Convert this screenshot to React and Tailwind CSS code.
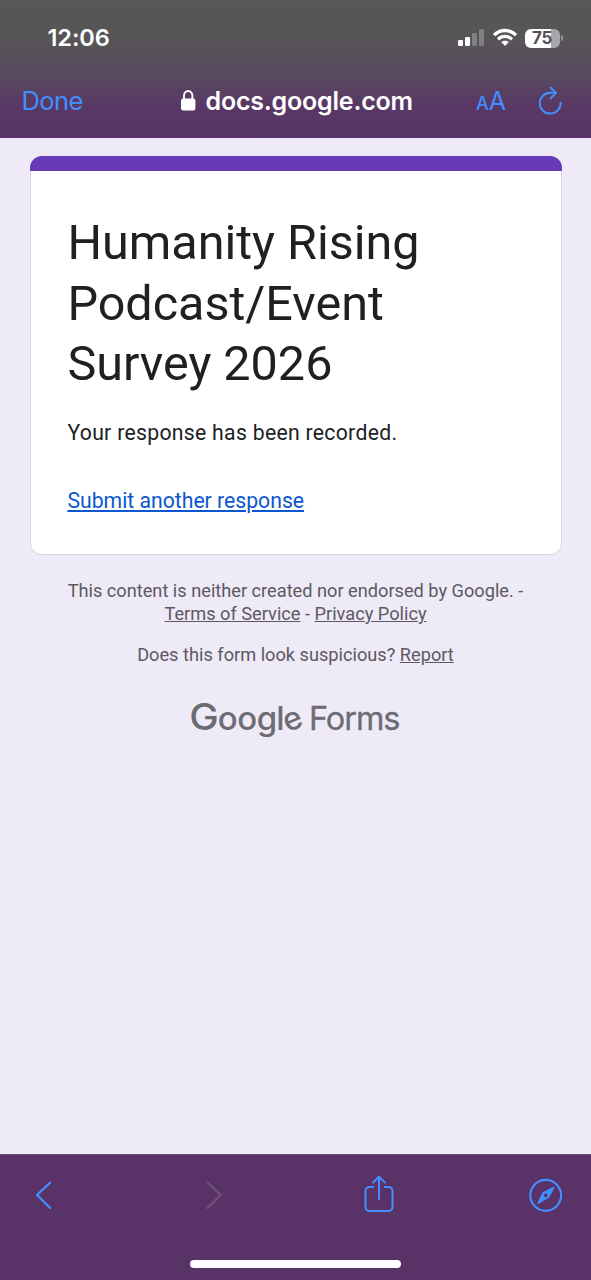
function StatusBar() {
  return (
    <div className="flex h-[76px] items-center justify-between pr-[28px] pl-[47.5px]">
      <span className="text-[23.5px] leading-none font-semibold tracking-[-0.1px] whitespace-nowrap text-white">12:06</span>
      <div className="flex items-center">
        <svg className="h-[20px] w-[28px]" viewBox="0 0 28 20" fill="#fff">
          <rect x="0" y="12" width="5" height="6" rx="1.3" />
          <rect x="7" y="9" width="5" height="9" rx="1.3" />
          <rect x="14" y="5" width="5" height="13" rx="1.3" opacity=".25" />
          <rect x="21" y="1" width="5" height="17" rx="1.3" opacity=".25" />
        </svg>
        <svg className="ml-[6px] h-[20px] w-[26px]" viewBox="0 0 26 20" fill="none" stroke="#fff">
          <path d="M2 7.2C8.2.9 17.8.9 24 7.2" strokeWidth="3.3" />
          <path d="M6 11.3c4-3.8 10-3.8 14 0" strokeWidth="3.2" />
          <path d="M13 18l-3.8-3.9c2.2-1.9 5.4-1.9 7.6 0z" fill="#fff" stroke="none" />
        </svg>
        <div className="ml-[7px] flex h-[19px] w-[35px] items-center justify-center rounded-[6px] bg-[linear-gradient(to_right,#fff_75%,#aaa6ab_75%)]">
          <span className="pr-[1px] text-[17px] leading-none font-bold tracking-[-0.3px] text-[#57505b]">75</span>
        </div>
        <div className="ml-[1px] h-[6px] w-[2px] rounded-r-full bg-[#98939a]" />
      </div>
    </div>
  );
}

function AddressBar() {
  return (
    <div className="flex h-[50px] items-center pl-[21.5px] text-[#438fff]">
      <span className="w-[158.5px] text-[25.5px] leading-none tracking-[-0.6px] whitespace-nowrap">Done</span>
      <svg className="h-[22px] w-[16px]" viewBox="0 0 16 22">
        <rect x="1" y="8.5" width="14.4" height="12" rx="2.2" fill="#fff" />
        <path d="M4 10V5.7a4.2 4.7 0 0 1 8.4 0V10" fill="none" stroke="#fff" strokeWidth="1.9" />
      </svg>
      <span className="ml-[9.5px] w-[270.5px] text-[25px] leading-none font-semibold tracking-[-0.2px] whitespace-nowrap text-white">docs.google.com</span>
      <span className="flex w-[61px] items-baseline leading-none">
        <span className="text-[18px] leading-none font-medium">A</span>
        <span className="text-[25px] leading-none">A</span>
      </span>
      <svg className="h-[30px] w-[26px]" viewBox="0 0 26 30" fill="none" stroke="currentColor" strokeWidth="2" strokeLinecap="round" strokeLinejoin="round">
        <path d="M23.6 16.8A10.4 10.4 0 1 1 13.3 6.8H19" />
        <path d="M13.4 1.5L19 6.9l-5.4 5.5" />
      </svg>
    </div>
  );
}

function Toolbar() {
  return (
    <footer className="flex h-[126px] flex-col items-center justify-between border-t border-[#6c4b7a] bg-[#593368] pt-[19px] pb-[12px]">
      <div className="flex w-full items-center pl-[34px] text-[#438fff]">
        <svg className="h-[42px] w-[18px]" viewBox="0 0 18 42" fill="none" stroke="currentColor" strokeWidth="2.2" strokeLinecap="round" strokeLinejoin="round">
          <path d="M16.2 8.5L3 21l13.2 13" />
        </svg>
        <svg className="ml-[153px] h-[42px] w-[18px] text-[#70517d]" viewBox="0 0 18 42" fill="none" stroke="currentColor" strokeWidth="2.2" strokeLinecap="round" strokeLinejoin="round">
          <path d="M2.5 8.5L15.7 21 2.5 34" />
        </svg>
        <svg className="ml-[141px] h-[42px] w-[30px]" viewBox="0 0 30 42" fill="none" stroke="currentColor" strokeWidth="2" strokeLinecap="round" strokeLinejoin="round">
          <path d="M10 13H5.5A4 4 0 0 0 1.5 17v16a4 4 0 0 0 4 4h19a4 4 0 0 0 4-4V17a4 4 0 0 0-4-4H20" strokeLinecap="butt" />
          <path d="M15 25V3M9 8.6L15 2.7l6 5.9" />
        </svg>
        <svg className="ml-[135px] h-[42px] w-[34px]" viewBox="0 0 34 42">
          <circle cx="16.7" cy="21.3" r="15.4" fill="none" stroke="currentColor" strokeWidth="2.1" />
          <path fill="currentColor" fillRule="evenodd" d="M25.2 13.9L20 23.8 9.3 29.9c-.8.3-1.3-.3-.9-1L13.5 18.6 24.2 12.8c.8-.3 1.4.4 1 1.1zM16.7 19.4a1.9 1.9 0 1 0 0 3.8 1.9 1.9 0 0 0 0-3.8z" />
        </svg>
      </div>
      <div className="h-[8px] w-[211px] rounded-full bg-white" />
    </footer>
  );
}

export default function App() {
  return (
    <div className="flex h-[1280px] w-[591px] flex-col overflow-hidden bg-[#eeeaf8] font-['Inter',sans-serif]">
      <header className="h-[138px] bg-[linear-gradient(to_bottom,#575757_0%,#575557_28%,#584860_56%,#583765_78%,#583467_100%)]">
        <StatusBar />
        <AddressBar />
      </header>
      <main className="flex flex-1 flex-col items-center pt-[18px] font-['Roboto',sans-serif]">
        <section className="mr-[59px] ml-[30px] h-[399px] w-[532px] self-start rounded-[12px] border border-[#d9d7de] bg-white">
          <div className="-mx-px -mt-px h-[15px] rounded-t-[12px] bg-[#673ab7]" />
          <div className="pl-[36.4px]">
            <h1 className="pt-[42px] text-[48.5px] leading-[60.6px] whitespace-nowrap text-[#202020]">
              Humanity Rising
              <br />
              Podcast/Event
              <br />
              Survey 2026
            </h1>
            <p className="mt-[23px] text-[21.2px] leading-[30px] tracking-[0.3px] whitespace-nowrap text-[#202124]">Your response has been recorded.</p>
            <a className="mt-[38px] block text-[21.2px] leading-[30px] whitespace-nowrap text-[#0b57d0] underline">Submit another response</a>
          </div>
        </section>
        <div className="mt-[24px] text-center text-[18.2px] leading-[23px] whitespace-nowrap text-[#5c5960]">
          <p>
            This content is neither created nor endorsed by Google. -
            <br />
            <a className="underline">Terms of Service</a> - <a className="underline">Privacy Policy</a>
          </p>
          <p className="mt-[18px]">
            Does this form look suspicious? <a className="underline">Report</a>
          </p>
        </div>
        <svg className="mt-[25px] h-[60px] w-[232px] overflow-visible fill-[#6e6c73] font-['Inter',sans-serif]" viewBox="0 0 232 60" role="img">
          <g fontWeight="500">
            <text x="9.3" y="38.5" fontSize="36.5" textLength="29.5" lengthAdjust="spacingAndGlyphs">G</text>
            <text x="37.8 57.2 76.8 96.2" y="38.5" fontSize="33">oogl</text>
            <text x="103.5" y="38.5" fontSize="32" transform="rotate(-22 113 29.5)">e</text>
          </g>
          <text x="129" y="38.5" fontSize="32.5" stroke="#6e6c73" strokeWidth=".3" textLength="91.5" lengthAdjust="spacing">Forms</text>
        </svg>
      </main>
      <Toolbar />
    </div>
  );
}
